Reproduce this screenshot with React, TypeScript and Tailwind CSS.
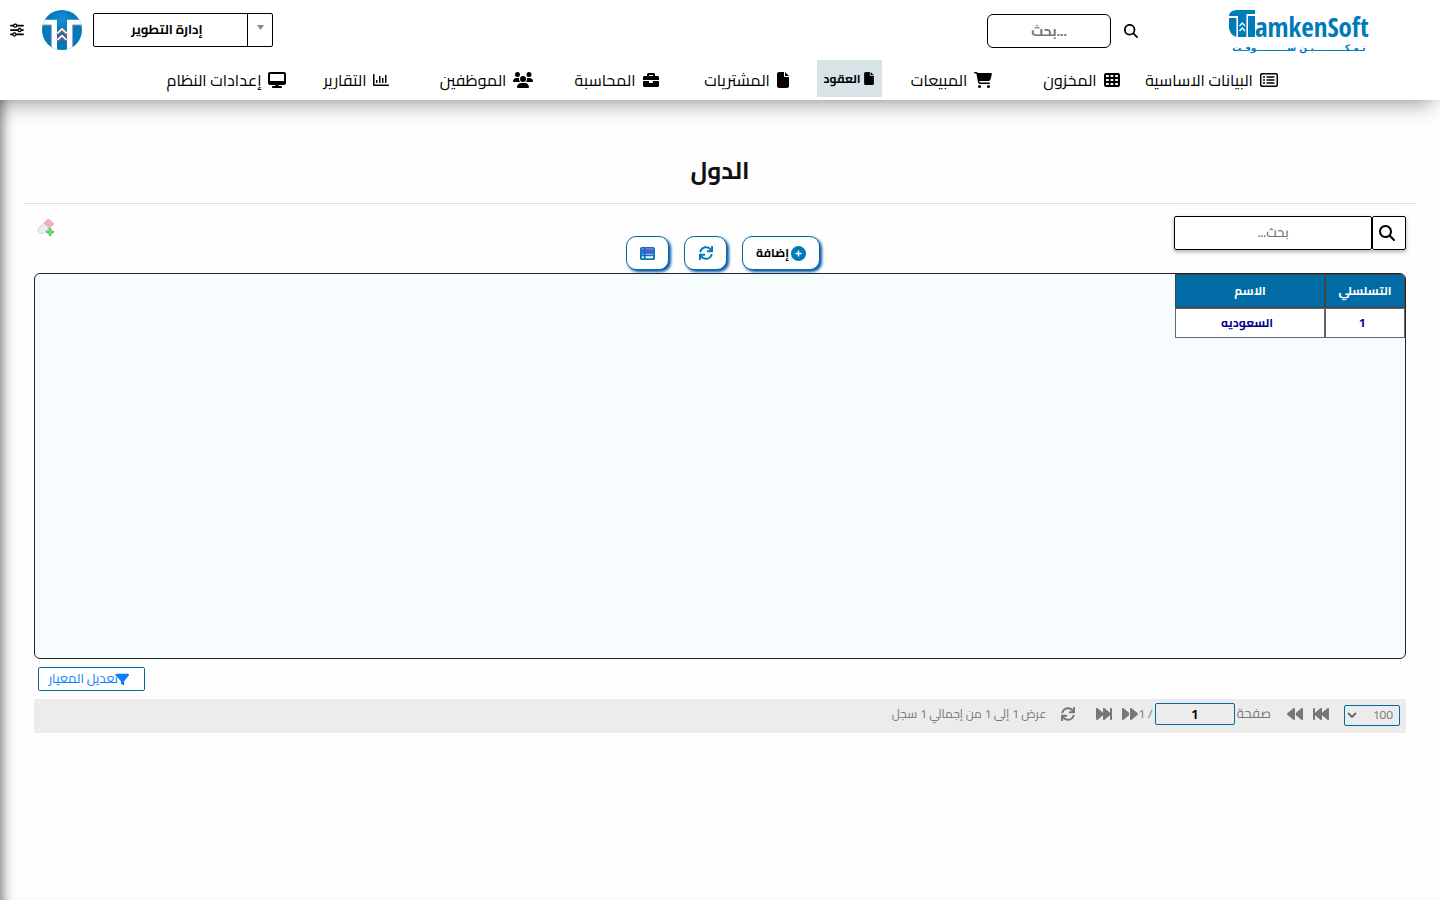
import { useState } from 'react';
import type { IconType } from 'react-icons';
import { FaBriefcase, FaRegChartBar, FaSync } from 'react-icons/fa';
import {
  FaBackward,
  FaBackwardFast,
  FaCartShopping,
  FaCirclePlus,
  FaDesktop,
  FaFile,
  FaFilter,
  FaForward,
  FaForwardFast,
  FaMagnifyingGlass,
  FaRegRectangleList,
  FaSliders,
  FaTableCells,
  FaTableList,
  FaUsers,
} from 'react-icons/fa6';

interface NavItem {
  label: string;
  icon: IconType;
  size: string;
  active?: boolean;
}

const navItems: NavItem[] = [
  { label: 'البيانات الاساسية', icon: FaRegRectangleList, size: 'w-[18px] h-[18px]' },
  { label: 'المخزون', icon: FaTableCells, size: 'w-4 h-4' },
  { label: 'المبيعات', icon: FaCartShopping, size: 'w-[18px] h-4' },
  { label: 'العقود', icon: FaFile, size: 'w-[10px] h-[13px]', active: true },
  { label: 'المشتريات', icon: FaFile, size: 'w-3 h-4' },
  { label: 'المحاسبة', icon: FaBriefcase, size: 'w-4 h-4' },
  { label: 'الموظفين', icon: FaUsers, size: 'w-5 h-4' },
  { label: 'التقارير', icon: FaRegChartBar, size: 'w-4 h-4' },
  { label: 'إعدادات النظام', icon: FaDesktop, size: 'w-[18px] h-4' },
];

const countries = [{ id: 1, name: 'السعوديه' }];

function BrandLogo() {
  return (
    <svg viewBox="0 0 142 46" className="h-[46px] w-[142px]" direction="ltr" aria-label="TamkenSoft">
      <path d="M1 7Q1 2 8 1H27V5H18.500V28H10V7Z" fill="#007bba" />
      <path d="M1 9H8.500V28Q2 26 1 19ZM20 7H27V28H20Z" fill="#007bba" />
      <path d="M0 8.500H9.300V28M19.300 28V6H27" fill="none" stroke="#fff" strokeWidth="1" />
      <path d="M11.500 17l2.750-3 2.750 3M11.500 22l2.750-3 2.750 3" fill="none" stroke="#fff" strokeWidth="1.4" />
      <text x="27" y="28" fill="#007bba" fontSize="27" fontWeight="700" fontFamily="'Open Sans Condensed', 'Roboto Condensed', 'Liberation Sans Narrow', sans-serif">
        amkenSoft
      </text>
      <text x="71" y="42" fill="#007bba" fontSize="9" fontWeight="700" textAnchor="middle" direction="rtl" fontFamily="'DejaVu Sans', sans-serif">
        تـمـكــــــــــيـن ســــــــــوفـت
      </text>
    </svg>
  );
}

function RoundLogo() {
  return (
    <svg viewBox="0 0 120 120" className="h-10 w-10" aria-hidden="true">
      <defs>
        <radialGradient id="disc" cx="50%" cy="25%" r="70%">
          <stop offset="0" stopColor="#1590d0" />
          <stop offset="0.5" stopColor="#0077b8" />
          <stop offset="1" stopColor="#007bba" />
        </radialGradient>
        <clipPath id="round">
          <circle cx="60" cy="60" r="60" />
        </clipPath>
      </defs>
      <g clipPath="url(#round)">
        <rect width="120" height="120" fill="url(#disc)" />
        <path d="M0 29H45V120H29V44H0ZM120 29H75V120H91V44H120Z" fill="#fff" />
        <path d="M0 45H28V120M120 45H92V120" fill="none" stroke="#d8a5b5" strokeWidth="2" />
        <path d="M46 72L60 59L74 72M46 92L60 79L74 92" fill="none" stroke="#d43c55" strokeWidth="8" />
        <path d="M46 70L60 57L74 70M46 90L60 77L74 90" fill="none" stroke="#fff" strokeWidth="5" />
      </g>
    </svg>
  );
}

function EraserIcon() {
  return (
    <svg viewBox="0 0 18 18" className="h-[18px] w-[18px]" aria-hidden="true">
      <path d="M2 10L8 4L13 9L7 15Q5 16 3 15L1 13Q0 12 2 10Z" fill="#ededed" stroke="#c4c4c4" strokeWidth=".8" />
      <path d="M7 5L10 2Q12 1 13 2L16 5Q17 6 16 7L12 10Z" fill="#f0b3bd" stroke="#dba3ac" strokeWidth=".8" />
      <path d="M12 10.500h2v2.500h2.500v2h-2.500v2.500h-2v-2.500H9.500v-2h2.500z" fill="#6fdc78" stroke="#45b552" strokeWidth=".7" />
    </svg>
  );
}

function Header() {
  return (
    <header className="relative z-10 h-[100px] bg-white shadow-[-8px_4px_20px_rgba(0,0,0,0.38)]">
      <div className="flex h-[60px] items-center justify-between pr-[70px] pl-[10px]">
        <div className="flex items-center">
          <a href="#" className="pt-1">
            <BrandLogo />
          </a>
          <div className="mr-[90px] flex items-center gap-[13px] pt-[2px]">
            <button aria-label="بحث">
              <FaMagnifyingGlass className="text-[14px]" />
            </button>
            {/* the embedded left-to-right marks keep the dots to the right of the word */}
            <input
              dir="ltr"
              aria-label="بحث في القوائم"
              placeholder={'\u200Eبحث\u200E...'}
              className="h-[34px] w-[124px] rounded-md border border-black bg-white text-center text-[14px] font-bold [unicode-bidi:isolate] placeholder:text-[#757575] placeholder:[direction:ltr] placeholder:[unicode-bidi:isolate]"
            />
          </div>
        </div>
        <div className="flex items-center">
          <div className="relative h-[34px] w-[180px]">
            <select
              aria-label="الإدارة"
              className="h-full w-full appearance-none rounded-xs border border-black bg-white pr-[32px] pl-0 text-center text-[13px] font-bold [text-align-last:center]"
            >
              <option>إدارة التطوير</option>
            </select>
            <span className="pointer-events-none absolute inset-y-0 right-0 flex w-[26px] justify-center border-l border-black pt-[12px]">
              <svg viewBox="0 0 7 5" className="h-[5px] w-[7px]">
                <path d="M0 0H7L3.500 5Z" fill="#888" />
              </svg>
            </span>
          </div>
          <a href="#" aria-label="TamkenSoft" className="mr-[11px] ml-[18px]">
            <RoundLogo />
          </a>
          <button aria-label="خيارات">
            <FaSliders className="text-[14px]" />
          </button>
        </div>
      </div>
      <nav className="flex h-10 justify-center pr-[2px]">
        {navItems.map(({ label, icon: Icon, size, active }) =>
          active ? (
            <div key={label} className="flex w-[75px] justify-center">
              <a href="#" className="flex h-[37px] w-[65px] items-center justify-center gap-1 bg-[#d7e3e7] text-[12px] font-bold whitespace-nowrap">
                <Icon className={`${size} shrink-0`} />
                {label}
              </a>
            </div>
          ) : (
            <a key={label} href="#" className="flex w-[130px] items-center justify-center gap-[7px] text-[16px] whitespace-nowrap">
              <Icon className={`${size} shrink-0`} />
              {label}
            </a>
          )
        )}
      </nav>
    </header>
  );
}

function Toolbar() {
  const buttonClass =
    'flex h-[34px] items-center justify-center rounded-[10px] border border-[#006ba4] bg-white shadow-[2px_2px_3px_#0754a5]';

  return (
    <div className="flex h-[69px] items-start justify-between pt-3">
      <div className="flex h-[34px] w-[232px] shadow-[0_2px_4px_rgba(0,0,0,0.3)]">
        <button aria-label="بحث" className="flex w-[34px] items-center justify-center rounded-xs border border-black bg-white pr-1">
          <FaMagnifyingGlass className="text-[16px]" />
        </button>
        <input
          aria-label="بحث في الدول"
          placeholder="بحث..."
          className="w-[198px] rounded-xs border border-black bg-white text-center text-[13px] font-semibold placeholder:text-[#757575]"
        />
      </div>
      <div className="flex gap-[15px] pt-5 pl-[6px]">
        <button className={`${buttonClass} w-[78px] gap-[2px] text-[12px] font-bold`}>
          <FaCirclePlus className="text-[15px] text-[#007bba]" />
          إضافة
        </button>
        <button aria-label="تحديث" className={`${buttonClass} w-[43px]`}>
          <FaSync className="text-[14px] text-[#007bba]" />
        </button>
        <button aria-label="الأعمدة" className={`${buttonClass} w-[43px]`}>
          <FaTableList className="bg-[linear-gradient(#b13fe8_60%,#fff_60%)] bg-[length:11px_9px] bg-center bg-no-repeat text-[15px] text-[#007bba]" />
        </button>
      </div>
      <div className="flex w-[232px] justify-end pt-[2px] pl-[3px]">
        <button aria-label="مسح">
          <EraserIcon />
        </button>
      </div>
    </div>
  );
}

function Pager() {
  const [page, setPage] = useState('1');

  return (
    <div className="mt-2 flex h-[34px] items-center rounded-xs bg-[#ececec] pr-[6px] pb-1 text-[12px] text-[#777]">
      <div className="relative mt-[2px] h-[21px] w-[56px]">
        <select
          aria-label="عدد السجلات"
          className="h-full w-full appearance-none rounded-xs border border-[#006ba4] bg-[#ececec] pr-[6px] text-[12px]"
        >
          <option>100</option>
        </select>
        <svg viewBox="0 0 10 6" className="pointer-events-none absolute top-[7px] left-[3px] h-[6px] w-[10px]">
          <path d="M1 1L5 5L9 1" fill="none" stroke="#666" strokeWidth="1.800" />
        </svg>
      </div>
      <button aria-label="الأولى" className="mr-[15px]">
        <FaBackwardFast className="text-[16px]" />
      </button>
      <button aria-label="السابقة" className="mr-[10px]">
        <FaBackward className="text-[16px]" />
      </button>
      <label htmlFor="page" className="mr-4 ml-[2px] text-[13px]">
        صفحة
      </label>
      <input
        id="page"
        value={page}
        onChange={(e) => setPage(e.target.value)}
        className="h-[22px] w-[80px] rounded-xs border border-[#006ba4] bg-[#ececec] text-center text-[13px] font-bold text-black"
      />
      <span className="mr-[2px]">/ 1</span>
      <button aria-label="التالية">
        <FaForward className="text-[16px]" />
      </button>
      <button aria-label="الأخيرة" className="mr-[10px]">
        <FaForwardFast className="text-[16px]" />
      </button>
      <button aria-label="تحديث السجلات" className="mr-[21px]">
        <FaSync className="text-[14px]" />
      </button>
      <span className="mr-[15px]">عرض 1 إلى 1 من إجمالي 1 سجل</span>
    </div>
  );
}

export default function App() {
  return (
    <div dir="rtl" className="min-h-screen bg-[#fefefe] font-['Cairo','Noto_Kufi_Arabic','DejaVu_Sans',sans-serif] text-black">
      <Header />
      <main className="min-h-[800px] px-6 pt-[50px] shadow-[inset_12px_0_12px_-9px_rgba(0,0,0,0.5)]">
        <h1 className="h-[53px] text-center text-[24px] leading-[42px] font-bold text-[#111]">الدول</h1>
        <hr className="border-[#dfdfdf]" />
        <div className="px-[10px]">
          <Toolbar />
          <div className="h-[386px] overflow-hidden rounded-md border border-[#212529] bg-[#f7fcff]">
            <table className="w-[230px] table-fixed border-separate border-spacing-0 text-center text-[12px] font-bold">
              <thead>
                <tr className="h-[34px] bg-[#006ba4] text-white">
                  <th className="w-[80px] border border-[#444] p-0">التسلسلي</th>
                  <th className="w-[150px] border border-[#444] p-0">الاسم</th>
                </tr>
              </thead>
              <tbody>
                {countries.map((country) => (
                  <tr key={country.id} className="h-[30px] bg-white text-[#00008b]">
                    <td className="border border-[#666] p-0 pr-[6px]">{country.id}</td>
                    <td className="border border-[#666] p-0 pr-[6px]">{country.name}</td>
                  </tr>
                ))}
              </tbody>
            </table>
          </div>
          <div className="mt-2 flex justify-end pl-1">
            <button className="flex h-6 w-[107px] items-center rounded-xs border border-[#006ba4] bg-white pr-[15px] text-[13px] whitespace-nowrap text-[#0a7cff]">
              <FaFilter className="shrink-0 text-[13px]" />
              <span className="-mr-[2px]">تعديل المعيار</span>
            </button>
          </div>
          <Pager />
        </div>
      </main>
    </div>
  );
}
